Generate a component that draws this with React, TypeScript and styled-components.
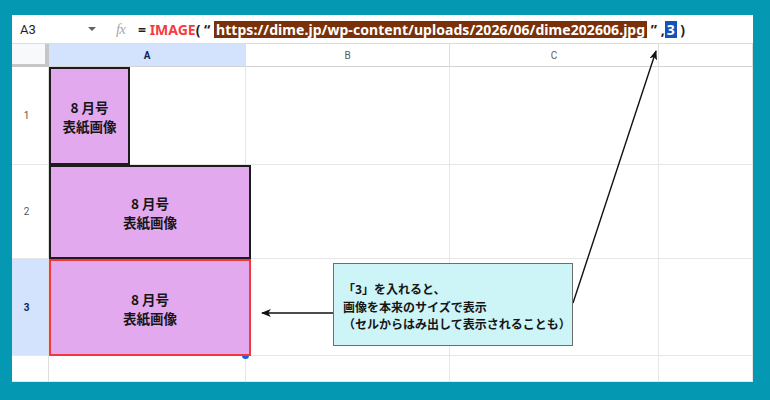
import React from "react";
import styled, { createGlobalStyle } from "styled-components";

const GlobalStyle = createGlobalStyle`
  html, body {
    margin: 0;
    padding: 0;
    background: #0598b3;
  }
  body {
    font-family: "Noto Sans", "Noto Sans CJK JP", sans-serif;
  }
`;

const Frame = styled.div`
  width: 770px;
  height: 400px;
  box-sizing: border-box;
  padding: 15px 17px 18px 12px;
  background: #0598b3;
`;

const Panel = styled.div`
  position: relative;
  width: 741px;
  height: 367px;
  background: #ffffff;
  overflow: hidden;
`;

const FormulaBar = styled.div`
  display: flex;
  align-items: center;
  height: 29px;
  box-sizing: border-box;
  border-bottom: 1px solid #dcdcdc;
`;

const NameBox = styled.div`
  display: flex;
  align-items: center;
  width: 104px;
  padding-left: 8px;
  box-sizing: border-box;
  font-family: Roboto, "Liberation Sans", sans-serif;
  font-size: 13px;
  color: #1f1f1f;

  span {
    flex: 1;
  }
`;

const Caret = styled.i`
  width: 0;
  height: 0;
  margin-right: 20px;
  border-left: 4px solid transparent;
  border-right: 4px solid transparent;
  border-top: 4px solid #5f6368;
`;

const FxMark = styled.span`
  width: 22px;
  font-family: "Liberation Serif", serif;
  font-style: italic;
  font-size: 15px;
  color: #a9a9a9;
  letter-spacing: -1px;
`;

const Formula = styled.div`
  display: flex;
  align-items: center;
  font-family: "Noto Sans", "Noto Sans CJK JP", sans-serif;
  font-weight: 700;
  font-size: 14px;
  color: #1f1f1f;
  white-space: pre;
`;

const FnName = styled.span`
  color: #f53b3f;
`;

const Mark = styled.span<{ $tone: "url" | "num" }>`
  display: inline-block;
  padding: 0 2px;
  line-height: 17px;
  color: #ffffff;
  background: ${(p) => (p.$tone === "url" ? "#7a3008" : "#1453b8")};
  letter-spacing: ${(p) => (p.$tone === "url" ? "0.06px" : "0")};
`;

const Sheet = styled.div`
  display: grid;
  grid-template-columns: 37px 197px 204px 209px 94px;
  grid-template-rows: 23px 98px 94px 97px 26px;
`;

const Corner = styled.div`
  box-sizing: border-box;
  background: #f8f9fa;
  border-right: 4px solid #c6c6c6;
  border-bottom: 3px solid #c6c6c6;
`;

const ColHead = styled.div<{ $active?: boolean }>`
  display: flex;
  align-items: center;
  justify-content: center;
  box-sizing: border-box;
  border-right: 1px solid #dedede;
  border-bottom: 1px solid #d3d3d3;
  background: ${(p) => (p.$active ? "#d3e3fd" : "#ffffff")};
  font-family: Roboto, "Liberation Sans", sans-serif;
  font-size: 10px;
  font-weight: ${(p) => (p.$active ? 700 : 400)};
  color: ${(p) => (p.$active ? "#0b2559" : "#5a5a5a")};
`;

const RowHead = styled.div<{ $active?: boolean }>`
  display: flex;
  align-items: center;
  justify-content: center;
  padding-right: 7px;
  box-sizing: border-box;
  border-right: 1px solid #dedede;
  border-bottom: 1px solid #e6e6e6;
  background: ${(p) => (p.$active ? "#d3e3fd" : "#ffffff")};
  font-family: Roboto, "Liberation Sans", sans-serif;
  font-size: 10px;
  font-weight: ${(p) => (p.$active ? 700 : 400)};
  color: ${(p) => (p.$active ? "#0b2559" : "#555555")};
`;

const Cell = styled.div`
  position: relative;
  display: flex;
  align-items: flex-start;
  box-sizing: border-box;
  border-right: 1px solid #e6e6e6;
  border-bottom: 1px solid #e6e6e6;
`;

const Cover = styled.div<{ $w: number; $h: number; $selected?: boolean }>`
  position: relative;
  z-index: 2;
  flex: none;
  display: flex;
  flex-direction: column;
  align-items: center;
  justify-content: center;
  padding-top: 2px;
  width: ${(p) => p.$w}px;
  height: ${(p) => p.$h}px;
  box-sizing: border-box;
  background: #e2a9ef;
  border: 2px solid ${(p) => (p.$selected ? "#f2383d" : "#1c1c1c")};
  font-family: "Noto Sans CJK JP", sans-serif;
  font-weight: 700;
  font-size: 13.5px;
  line-height: 19px;
  color: #161616;
`;

const Handle = styled.span`
  position: absolute;
  right: -4px;
  bottom: -4px;
  z-index: 1;
  width: 7px;
  height: 7px;
  border-radius: 50%;
  background: #1a5fd6;
`;

const Callout = styled.div`
  position: absolute;
  left: 321px;
  top: 248px;
  z-index: 4;
  display: flex;
  flex-direction: column;
  justify-content: center;
  width: 240px;
  height: 83px;
  padding: 4px 0 0 9px;
  box-sizing: border-box;
  background: #cdf4f7;
  border: 1.5px solid #6d6d6d;
  font-family: "Noto Sans CJK JP", sans-serif;
  font-weight: 700;
  font-size: 12px;
  line-height: 17.5px;
  white-space: nowrap;
  color: #161616;
`;

const Arrows = styled.svg`
  position: absolute;
  left: 0;
  top: 0;
  z-index: 3;
  pointer-events: none;
`;

const covers = [
  { w: 81, h: 98 },
  { w: 202, h: 94 },
  { w: 202, h: 97, selected: true },
];

const App: React.FC = () => {
  return (
    <Frame>
      <GlobalStyle />
      <Panel>
        <FormulaBar>
          <NameBox>
            <span>A3</span>
            <Caret />
          </NameBox>
          <FxMark>fx</FxMark>
          <Formula>
            <span>= </span>
            <FnName>IMAGE</FnName>
            <span>( “ </span>
            <Mark $tone="url">https://dime.jp/wp-content/uploads/2026/06/dime202606.jpg</Mark>
            <span> ” ,</span>
            <Mark $tone="num">3</Mark>
            <span> )</span>
          </Formula>
        </FormulaBar>

        <Sheet>
          <Corner />
          <ColHead $active>A</ColHead>
          <ColHead>B</ColHead>
          <ColHead>C</ColHead>
          <ColHead />

          {covers.map((c, i) => (
            <React.Fragment key={i}>
              <RowHead $active={c.selected}>{i + 1}</RowHead>
              <Cell>
                <Cover $w={c.w} $h={c.h} $selected={c.selected}>
                  <span>8 月号</span>
                  <span>表紙画像</span>
                </Cover>
                {c.selected && <Handle />}
              </Cell>
              <Cell />
              <Cell />
              <Cell />
            </React.Fragment>
          ))}

          <RowHead />
          <Cell />
          <Cell />
          <Cell />
          <Cell />
        </Sheet>

        <Arrows width="741" height="367" viewBox="0 0 741 367">
          <defs>
            <marker id="head" viewBox="0 0 10 10" refX="9" refY="5" markerWidth="7" markerHeight="7" orient="auto-start-reverse">
              <path d="M0 1 L10 5 L0 9 L2.5 5 Z" fill="#111" />
            </marker>
          </defs>
          <line x1="561" y1="288" x2="644" y2="36" stroke="#111" strokeWidth="1.4" markerEnd="url(#head)" />
          <line x1="321" y1="298" x2="250" y2="298" stroke="#111" strokeWidth="1.4" markerEnd="url(#head)" />
        </Arrows>

        <Callout>
          <span>「3」を入れると、</span>
          <span>画像を本来のサイズで表示</span>
          <span>（セルからはみ出して表示されることも）</span>
        </Callout>
      </Panel>
    </Frame>
  );
};

export default App;
